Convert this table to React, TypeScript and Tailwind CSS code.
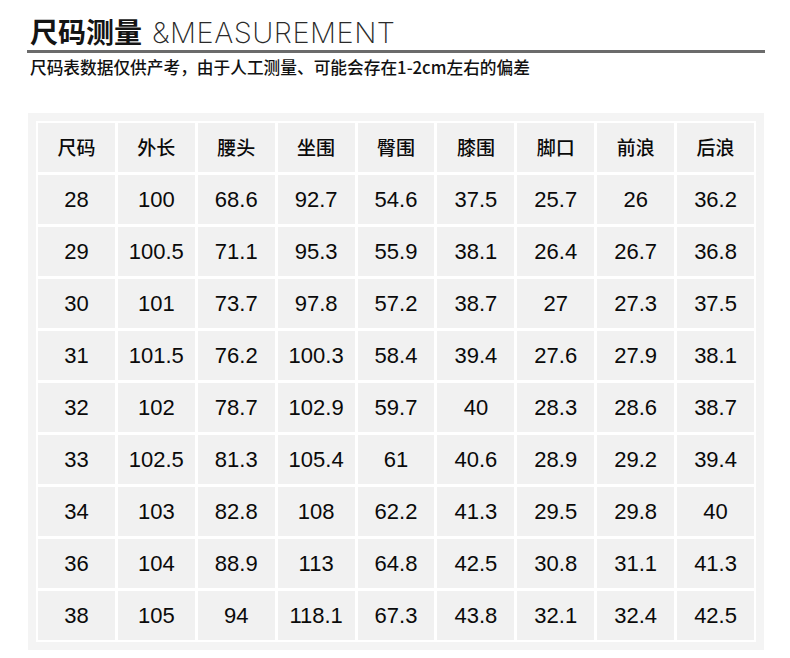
const headers = ["尺码", "外长", "腰头", "坐围", "臀围", "膝围", "脚口", "前浪", "后浪"];

const rows = [
  ["28", "100", "68.6", "92.7", "54.6", "37.5", "25.7", "26", "36.2"],
  ["29", "100.5", "71.1", "95.3", "55.9", "38.1", "26.4", "26.7", "36.8"],
  ["30", "101", "73.7", "97.8", "57.2", "38.7", "27", "27.3", "37.5"],
  ["31", "101.5", "76.2", "100.3", "58.4", "39.4", "27.6", "27.9", "38.1"],
  ["32", "102", "78.7", "102.9", "59.7", "40", "28.3", "28.6", "38.7"],
  ["33", "102.5", "81.3", "105.4", "61", "40.6", "28.9", "29.2", "39.4"],
  ["34", "103", "82.8", "108", "62.2", "41.3", "29.5", "29.8", "40"],
  ["36", "104", "88.9", "113", "64.8", "42.5", "30.8", "31.1", "41.3"],
  ["38", "105", "94", "118.1", "67.3", "43.8", "32.1", "32.4", "42.5"],
];

export default function App() {
  return (
    <div className="h-[658px] w-[790px] overflow-hidden bg-white font-['Liberation_Sans','Noto_Sans_CJK_SC',sans-serif] text-[#111]">
      <div className="ml-[27px] w-[738px] pt-[15px]">
        <div className="flex items-baseline border-b-[3px] border-[#6b6b6b] pb-[1px] pl-[3px]">
          <span className="font-['Noto_Sans_CJK_SC',sans-serif] text-[28px] font-bold leading-[33px] text-[#141414]">尺码测量</span>
          <span className="ml-[10px] font-['Inter',sans-serif] text-[29px] font-extralight leading-[33px] tracking-[0.5px] text-[#2a2a2a]">&amp;MEASUREMENT</span>
        </div>
        <p className="mt-[4px] pl-[3px] font-['Noto_Sans_CJK_SC',sans-serif] text-[16.7px] font-medium leading-[20px] text-[#111]">
          尺码表数据仅供产考，由于人工测量、可能会存在1-2cm左右的偏差
        </p>
      </div>

      <div className="ml-[28px] mt-[36px] w-[736px] bg-[#f4f4f4] p-[8px]">
        <div className="grid grid-cols-9 gap-[3px] bg-white p-[2px]">
          {headers.map((h) => (
            <div key={h} className="flex h-[49px] items-center justify-center bg-[#f1f1f1] font-['Noto_Sans_CJK_SC',sans-serif] text-[19px] font-medium text-[#0a0a0a]">
              {h}
            </div>
          ))}
          {rows.flatMap((row, r) =>
            row.map((cell, c) => (
              <div key={`${r}-${c}`} className="flex h-[49px] items-center justify-center bg-[#f1f1f1] text-[22px] text-[#0a0a0a]">
                {cell}
              </div>
            ))
          )}
        </div>
      </div>
    </div>
  );
}
